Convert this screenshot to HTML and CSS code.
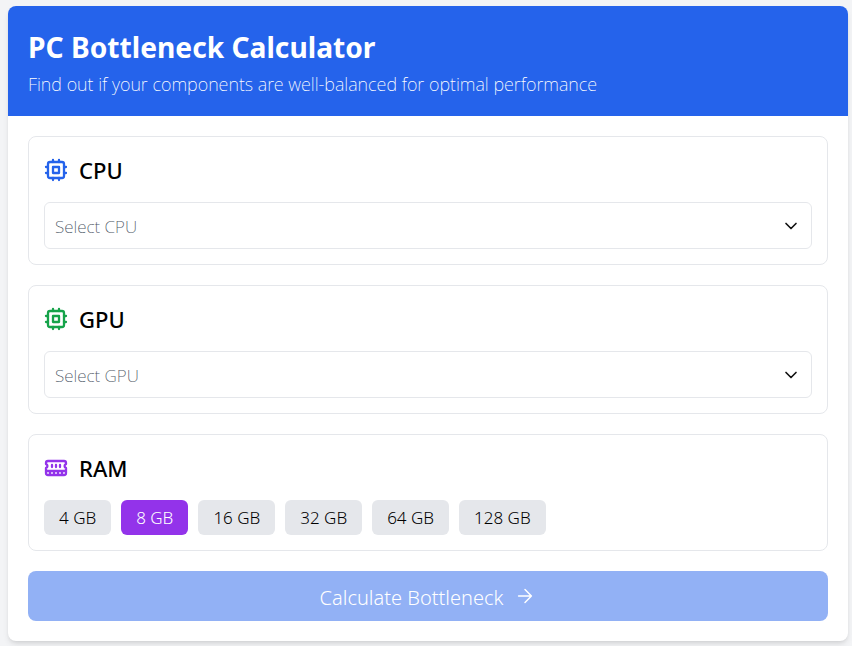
FILE: index.html
```html
<!DOCTYPE html>
<html lang="en">
<head>
  <meta charset="UTF-8">
  <meta name="viewport" content="width=device-width, initial-scale=1.0">
  <title>PC Bottleneck Calculator</title>
  <link rel="stylesheet" href="styles.css">
</head>
<body>

  <div class="calculator">
    <div class="header">
      <h1>PC Bottleneck Calculator</h1>
      <p>Find out if your components are well-balanced for optimal performance</p>
    </div>

    <div class="content">
      <div class="section">
        <div class="section-title">
          <svg class="icon icon-cpu" viewBox="0 0 24 24"><rect x="4" y="4" width="16" height="16" rx="2"/><rect x="9" y="9" width="6" height="6"/><path d="M15 2v2M15 20v2M2 15h2M2 9h2M20 15h2M20 9h2M9 2v2M9 20v2"/></svg>
          <h2>CPU</h2>
        </div>
        <div class="select-box">
          <span>Select CPU</span>
          <svg class="chevron" viewBox="0 0 24 24"><path d="m6 9 6 6 6-6"/></svg>
        </div>
      </div>

      <div class="section">
        <div class="section-title">
          <svg class="icon icon-gpu" viewBox="0 0 24 24"><rect x="4" y="4" width="16" height="16" rx="2"/><rect x="9" y="9" width="6" height="6"/><path d="M15 2v2M15 20v2M2 15h2M2 9h2M20 15h2M20 9h2M9 2v2M9 20v2"/></svg>
          <h2>GPU</h2>
        </div>
        <div class="select-box">
          <span>Select GPU</span>
          <svg class="chevron" viewBox="0 0 24 24"><path d="m6 9 6 6 6-6"/></svg>
        </div>
      </div>

      <div class="section">
        <div class="section-title">
          <svg class="icon icon-ram" viewBox="0 0 24 24"><path d="M6 19v-3M10 19v-3M14 19v-3M18 19v-3M8 11V9M16 11V9M12 11V9M2 15h20M2 7a2 2 0 0 1 2-2h16a2 2 0 0 1 2 2v1.1a2 2 0 0 0 0 3.837V17a2 2 0 0 1-2 2H4a2 2 0 0 1-2-2v-5.1a2 2 0 0 0 0-3.837Z"/></svg>
          <h2>RAM</h2>
        </div>
        <div class="ram-options">
          <button class="ram-btn">4 GB</button>
          <button class="ram-btn active">8 GB</button>
          <button class="ram-btn">16 GB</button>
          <button class="ram-btn">32 GB</button>
          <button class="ram-btn">64 GB</button>
          <button class="ram-btn">128 GB</button>
        </div>
      </div>

      <button class="calculate-btn">
        Calculate Bottleneck
        <svg class="arrow" viewBox="0 0 24 24"><path d="M5 12h14M12 5l7 7-7 7"/></svg>
      </button>
    </div>
  </div>

</body>
</html>
```

FILE: styles.css
```css
* {
  box-sizing: border-box;
}

body {
  font-family: 'Noto Sans', sans-serif;
  background-color: #f3f4f6;
  color: #000;
  margin: 0;
  padding: 6px 4px 5px 8px;
}

.calculator {
  background: #fff;
  border-radius: 8px;
  overflow: hidden;
  box-shadow: 0 4px 6px -1px rgba(0, 0, 0, 0.1), 0 2px 4px -2px rgba(0, 0, 0, 0.1);
}

.header {
  background-color: #2563eb;
  color: #fff;
  height: 110px;
  padding: 23px 20px 0;
}

.header h1 {
  margin: 0;
  font-size: 28.2px;
  line-height: 36px;
  font-weight: 700;
}

.header p {
  margin: 7px 0 0;
  font-size: 18px;
  line-height: 24px;
  font-weight: 200;
}

.content {
  padding: 20px;
  display: flex;
  flex-direction: column;
  gap: 20px;
}

.section {
  border: 1px solid #e5e7eb;
  border-radius: 8px;
  padding: 15px;
}

.section-title {
  display: flex;
  align-items: center;
  gap: 11px;
  height: 36px;
  margin-bottom: 14px;
}

.section-title h2 {
  margin: 0;
  font-size: 22px;
  font-weight: 500;
}

.icon {
  width: 24px;
  height: 24px;
  fill: none;
  stroke-width: 2.3;
  stroke-linecap: round;
  stroke-linejoin: round;
}

.icon-cpu { stroke: #2563eb; }
.icon-gpu { stroke: #16a34a; }
.icon-ram { stroke: #9333ea; }

.select-box {
  height: 47px;
  border: 1px solid #e5e7eb;
  border-radius: 6px;
  padding: 0 10px;
  display: flex;
  align-items: center;
  justify-content: space-between;
  font-size: 17px;
  font-weight: 200;
  color: #4b5563;
}

.select-box span {
  margin-top: 2px;
}

.chevron {
  width: 20px;
  height: 20px;
  fill: none;
  stroke: #111;
  stroke-width: 2;
  stroke-linecap: round;
  stroke-linejoin: round;
}

.ram-options {
  display: flex;
  gap: 10px;
}

.ram-btn {
  font-family: inherit;
  font-size: 17px;
  font-weight: 300;
  height: 35px;
  padding: 0 15px;
  border: none;
  border-radius: 6px;
  background-color: #e5e7eb;
  color: #000;
}

.ram-btn.active {
  background-color: #9333ea;
  color: #fff;
}

.calculate-btn {
  font-family: inherit;
  font-size: 20px;
  font-weight: 300;
  height: 50px;
  padding-top: 4px;
  border: none;
  border-radius: 8px;
  background-color: #92b1f5;
  color: #fff;
  display: flex;
  align-items: center;
  justify-content: center;
  gap: 11px;
}

.arrow {
  width: 22px;
  height: 22px;
  margin-top: -4px;
  fill: none;
  stroke: #fff;
  stroke-width: 1.6;
  stroke-linecap: round;
  stroke-linejoin: round;
}
```
